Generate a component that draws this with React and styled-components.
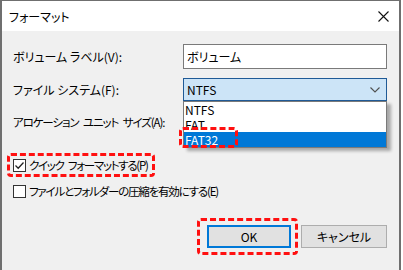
import React from "react";
import styled, { createGlobalStyle } from "styled-components";

const Global = createGlobalStyle`
  html, body { margin: 0; padding: 0; background: #ffffff; }
  body {
    font-family: "Noto Sans CJK JP", "Noto Sans", sans-serif;
    font-size: 12px;
    color: #000;
    font-feature-settings: "palt";
  }
`;

const Window = styled.div`
  width: 397px;
  height: 269px;
  border-top: 1px solid #6f6f6f;
  border-left: 2px solid #6f6f6f;
  border-right: 2px solid #6f6f6f;
  display: flex;
  flex-direction: column;
  background: #f0f0f0;
`;

const TitleBar = styled.div`
  height: 30px;
  background: #fff;
  display: flex;
  align-items: center;
  justify-content: space-between;
  padding: 0 10px 0 7px;
  font-size: 12px;
`;

const CloseIcon = () => (
  <svg width="11" height="11" viewBox="0 0 11 11">
    <path d="M0.5 0.5 L10.5 10.5 M10.5 0.5 L0.5 10.5" stroke="#111" strokeWidth="1.1" fill="none" />
  </svg>
);

const Body = styled.div`
  flex: 1;
  display: flex;
  flex-direction: column;
  padding: 13px 12px 0 11px;
`;

const FormRow = styled.div`
  display: grid;
  grid-template-columns: 170px 1fr;
  align-items: center;
  height: ${(p) => p.$h}px;
  margin-bottom: 9px;
`;

const Text = styled.span`
  white-space: nowrap;
  line-height: 16px;
  font-size: ${(p) => p.$fs || 12}px;
  letter-spacing: ${(p) => p.$ls || 0}px;
  word-spacing: ${(p) => p.$ws || 0}px;
`;

const TextBox = styled.div`
  height: 25px;
  box-sizing: border-box;
  border: 1px solid #7a7a7a;
  background: #fff;
  display: flex;
  align-items: center;
  padding-left: 3px;
`;

const SelectWrap = styled.div`
  position: relative;
  height: 23px;
`;

const SelectBox = styled.div`
  height: 23px;
  box-sizing: border-box;
  border: 1px solid #1f5a96;
  background: #cce4f7;
  display: flex;
  align-items: center;
  justify-content: space-between;
  padding: 0 6px 0 3px;
`;

const Chevron = () => (
  <svg width="10" height="6" viewBox="0 0 10 6">
    <path d="M0.5 0.5 L5 5 L9.5 0.5" stroke="#505050" strokeWidth="1.1" fill="none" />
  </svg>
);

const DropList = styled.div`
  position: absolute;
  top: 100%;
  left: 0;
  right: 0;
  background: #fff;
  border: 1px solid #7a7a7a;
  box-shadow: 4px 3px 3px rgba(0, 0, 0, 0.3);
  z-index: 2;
`;

const DropItem = styled.div`
  position: relative;
  height: 15px;
  line-height: 15px;
  padding-left: 1px;
  background: ${(p) => (p.$selected ? "#0078d7" : "transparent")};
  color: ${(p) => (p.$selected ? "#fff" : "#000")};
`;

const Annotation = styled.span`
  position: absolute;
  top: ${(p) => p.$t}px;
  left: ${(p) => p.$l}px;
  width: ${(p) => p.$w}px;
  height: ${(p) => p.$h}px;
  box-sizing: border-box;
  border: 3px dashed #ff1010;
  border-radius: 4px;
  pointer-events: none;
  z-index: 3;
`;

const CheckRow = styled.div`
  display: flex;
  align-items: center;
  gap: 3px;
  height: ${(p) => p.$h}px;
  margin-top: 7px;
  white-space: nowrap;
`;

const HighlightRow = styled(CheckRow)`
  align-self: flex-start;
  box-sizing: border-box;
  margin: 10px 0 0 -6px;
  padding: 0 4px 0 3px;
  border: 3px dashed #ff1010;
  border-radius: 4px;
`;

const Box = styled.span`
  width: 13px;
  height: 13px;
  box-sizing: border-box;
  border: 1px solid #333;
  background: #fff;
  display: inline-flex;
  align-items: center;
  justify-content: center;
  flex: none;
`;

const Check = () => (
  <svg width="11" height="11" viewBox="0 0 11 11">
    <path d="M1.5 5.5 L4.2 8.2 L9.5 2.5" stroke="#222" strokeWidth="1.3" fill="none" />
  </svg>
);

const Buttons = styled.div`
  display: flex;
  justify-content: flex-end;
  gap: 10px;
  margin-top: 27px;
`;

const Button = styled.div`
  position: relative;
  width: ${(p) => p.$w}px;
  height: 23px;
  box-sizing: border-box;
  background: #e1e1e1;
  border: ${(p) => (p.$default ? "2px solid #0078d7" : "1px solid #adadad")};
  display: flex;
  align-items: center;
  justify-content: center;
`;

export default function App() {
  return (
    <>
      <Global />
      <Window>
        <TitleBar>
          <span>フォーマット</span>
          <CloseIcon />
        </TitleBar>
        <Body>
          <FormRow $h={25}>
            <Text>ボリューム ラベル(V):</Text>
            <TextBox>ボリューム</TextBox>
          </FormRow>
          <FormRow $h={23}>
            <Text>ファイル システム(F):</Text>
            <SelectWrap>
              <SelectBox>
                <span>NTFS</span>
                <Chevron />
              </SelectBox>
              <DropList>
                <DropItem>NTFS</DropItem>
                <DropItem>FAT</DropItem>
                <DropItem $selected>
                  FAT32
                  <Annotation $t={-5} $l={-5} $w={59} $h={21} />
                </DropItem>
              </DropList>
            </SelectWrap>
          </FormRow>
          <FormRow $h={24}>
            <Text $fs={11.5} $ls={-1.1} $ws={3}>アロケーション ユニット サイズ(A):</Text>
            <span />
          </FormRow>
          <HighlightRow $h={24}>
            <Box>
              <Check />
            </Box>
            <Text $fs={11.5} $ls={-1.3} $ws={3}>クイック フォーマットする(P)</Text>
          </HighlightRow>
          <CheckRow $h={14}>
            <Box />
            <Text $fs={11.5} $ls={-1.2}>ファイルとフォルダーの圧縮を有効にする(E)</Text>
          </CheckRow>
          <Buttons>
            <Button $w={84} $default>
              OK
              <Annotation $t={-9} $l={-12} $w={101} $h={37} />
            </Button>
            <Button $w={86}>キャンセル</Button>
          </Buttons>
        </Body>
      </Window>
    </>
  );
}
